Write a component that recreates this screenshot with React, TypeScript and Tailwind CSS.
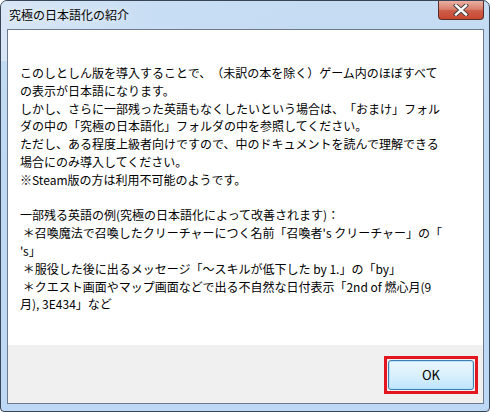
import React from "react";

const lines: string[] = [
  "このしとしん版を導入することで、（未訳の本を除く）ゲーム内のほぼすべて",
  "の表示が日本語になります。",
  "しかし、さらに一部残った英語もなくしたいという場合は、「おまけ」フォル",
  "ダの中の「究極の日本語化」フォルダの中を参照してください。",
  "ただし、ある程度上級者向けですので、中のドキュメントを読んで理解できる",
  "場合にのみ導入してください。",
  "※Steam版の方は利用不可能のようです。",
  "",
  "一部残る英語の例(究極の日本語化によって改善されます)：",
  " ＊召喚魔法で召喚したクリーチャーにつく名前「召喚者's クリーチャー」の「",
  "'s」",
  " ＊服役した後に出るメッセージ「～スキルが低下した by 1.」の「by」",
  " ＊クエスト画面やマップ画面などで出る不自然な日付表示「2nd of 燃心月(9",
  "月), 3E434」など",
];

export default function App() {
  return (
    <div className="w-[490px] h-[412px] bg-white font-['Noto_Sans_CJK_JP',sans-serif] text-[12px] text-black [text-spacing-trim:space-all]">
      <div className="relative w-full h-full rounded-t-[7px] rounded-b-[4px] border border-[#374557] bg-gradient-to-b from-[#c5dcf3] via-[#bed8f2] to-[#bcd8f5] flex flex-col pl-[6px] pr-[5px] pb-[7px] overflow-hidden">
        {/* glare */}
        <div className="absolute left-0 top-0 w-[300px] h-[60px] bg-gradient-to-r from-[#dde9f6] via-[#c9def4] to-transparent opacity-80" />
        <div className="relative h-[28px] flex items-start">
          <div className="pl-[2px] pt-[5px] leading-[18px] text-[12px] text-black [text-shadow:0_0_6px_rgba(255,255,255,0.9)]">
            究極の日本語化の紹介
          </div>
          <div className="absolute top-0 right-0 w-[46px] h-[19px] rounded-b-[4px] border border-t-0 border-[#5b2e2a] bg-gradient-to-b from-[#e8a99b] via-[#cf5f4c] to-[#c8472f] flex items-center justify-center overflow-hidden">
            <div className="absolute inset-x-0 top-0 h-[9px] bg-gradient-to-b from-[#eab4a8] to-[#d98470] opacity-70" />
            <svg width="16" height="12" viewBox="0 0 16 12" className="relative">
              <path d="M3 1.5 L13 10.5 M13 1.5 L3 10.5" stroke="#3b3b3b" strokeWidth="4.2" strokeLinecap="square" />
              <path d="M3 1.5 L13 10.5 M13 1.5 L3 10.5" stroke="#ffffff" strokeWidth="2.4" strokeLinecap="square" />
            </svg>
          </div>
        </div>
        <div className="relative flex-1 flex flex-col border border-[#6b7a8c] bg-white">
          <div className="flex-1 bg-white pl-[12px] pt-[34px] leading-[17.8px]">
            {lines.map((l, i) => (
              <div key={i} className="whitespace-pre h-[17.8px]">
                {l}
              </div>
            ))}
          </div>
          <div className="h-[58px] bg-[#f0f0f0] flex justify-end items-start pt-[11px] pr-[5px]">
            <div className="border-[3px] border-[#e3151f] p-[1px]">
              <div className="w-[86px] h-[30px] rounded-[3px] border border-[#3c7fb1] bg-gradient-to-b from-[#eaf6fd] via-[#d9f0fc] to-[#bee6fd] flex items-center justify-center shadow-[inset_0_0_0_1px_#b8e3f8]">
                <span className="text-[13px] leading-[14px]">OK</span>
              </div>
            </div>
          </div>
        </div>
      </div>
    </div>
  );
}
